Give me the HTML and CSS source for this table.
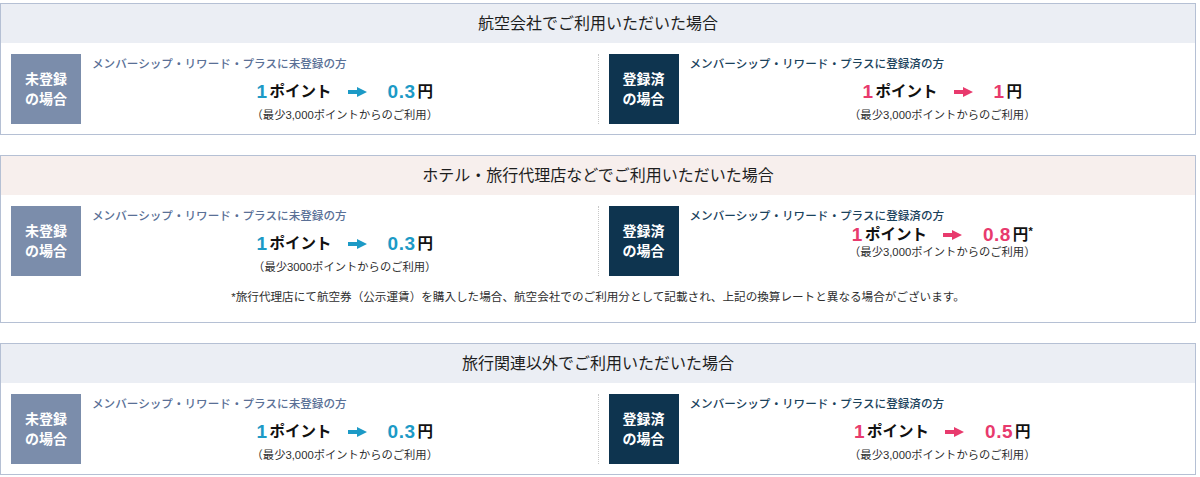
FILE: index.html
```html
<!DOCTYPE html>
<html lang="ja">
<head>
<meta charset="utf-8">
<title>ポイント換算レート</title>
<link rel="stylesheet" href="styles.css">
</head>
<body>
<div class="wrap">

  <section class="card">
    <h2 class="card-head">航空会社でご利用いただいた場合</h2>
    <div class="card-body">
      <div class="col">
        <div class="badge badge-un">未登録<br>の場合</div>
        <div class="info">
          <p class="member member-un">メンバーシップ・リワード・プラスに未登録の方</p>
          <p class="rate rate-un"><span class="num">1</span><span class="unit">ポイント</span><svg class="arrow" viewBox="0 0 19 10"><path d="M0 3h9V0l10 5-10 5V7H0z"/></svg><span class="num">0.3</span><span class="unit">円</span></p>
          <p class="sub">（最少3,000ポイントからのご利用）</p>
        </div>
      </div>
      <div class="col col-right">
        <div class="badge badge-reg">登録済<br>の場合</div>
        <div class="info">
          <p class="member member-reg">メンバーシップ・リワード・プラスに登録済の方</p>
          <p class="rate rate-reg"><span class="num">1</span><span class="unit">ポイント</span><svg class="arrow" viewBox="0 0 19 10"><path d="M0 3h9V0l10 5-10 5V7H0z"/></svg><span class="num">1</span><span class="unit">円</span></p>
          <p class="sub">（最少3,000ポイントからのご利用）</p>
        </div>
      </div>
    </div>
  </section>

  <section class="card">
    <h2 class="card-head card-head-pink">ホテル・旅行代理店などでご利用いただいた場合</h2>
    <div class="card-body">
      <div class="col">
        <div class="badge badge-un">未登録<br>の場合</div>
        <div class="info">
          <p class="member member-un">メンバーシップ・リワード・プラスに未登録の方</p>
          <p class="rate rate-un"><span class="num">1</span><span class="unit">ポイント</span><svg class="arrow" viewBox="0 0 19 10"><path d="M0 3h9V0l10 5-10 5V7H0z"/></svg><span class="num">0.3</span><span class="unit">円</span></p>
          <p class="sub">（最少3000ポイントからのご利用）</p>
        </div>
      </div>
      <div class="col col-right">
        <div class="badge badge-reg">登録済<br>の場合</div>
        <div class="info compact">
          <p class="member member-reg">メンバーシップ・リワード・プラスに登録済の方</p>
          <p class="rate rate-reg"><span class="num">1</span><span class="unit">ポイント</span><svg class="arrow" viewBox="0 0 19 10"><path d="M0 3h9V0l10 5-10 5V7H0z"/></svg><span class="num">0.8</span><span class="unit">円<sup class="ast">*</sup></span></p>
          <p class="sub">（最少3,000ポイントからのご利用）</p>
        </div>
      </div>
    </div>
    <p class="note">*旅行代理店にて航空券（公示運賃）を購入した場合、航空会社でのご利用分として記載され、上記の換算レートと異なる場合がございます。</p>
  </section>

  <section class="card">
    <h2 class="card-head">旅行関連以外でご利用いただいた場合</h2>
    <div class="card-body">
      <div class="col">
        <div class="badge badge-un">未登録<br>の場合</div>
        <div class="info">
          <p class="member member-un">メンバーシップ・リワード・プラスに未登録の方</p>
          <p class="rate rate-un"><span class="num">1</span><span class="unit">ポイント</span><svg class="arrow" viewBox="0 0 19 10"><path d="M0 3h9V0l10 5-10 5V7H0z"/></svg><span class="num">0.3</span><span class="unit">円</span></p>
          <p class="sub">（最少3,000ポイントからのご利用）</p>
        </div>
      </div>
      <div class="col col-right">
        <div class="badge badge-reg">登録済<br>の場合</div>
        <div class="info">
          <p class="member member-reg">メンバーシップ・リワード・プラスに登録済の方</p>
          <p class="rate rate-reg"><span class="num">1</span><span class="unit">ポイント</span><svg class="arrow" viewBox="0 0 19 10"><path d="M0 3h9V0l10 5-10 5V7H0z"/></svg><span class="num">0.5</span><span class="unit">円</span></p>
          <p class="sub">（最少3,000ポイントからのご利用）</p>
        </div>
      </div>
    </div>
  </section>

</div>
</body>
</html>
```

FILE: styles.css
```css
* { box-sizing: border-box; }

html, body {
  margin: 0;
  padding: 0;
  background: #ffffff;
}

body {
  font-family: "Liberation Sans", "Noto Sans CJK JP", sans-serif;
  color: #333333;
}

.wrap {
  width: 1196px;
  padding-top: 3px;
}

.card {
  border: 1px solid #b5c0d4;
  margin: 0 0 20px;
}

.card-head {
  margin: 0;
  height: 39px;
  line-height: 39px;
  background: #ebeef4;
  text-align: center;
  font-size: 16px;
  font-weight: 400;
  color: #1e1e1e;
}

.card-head-pink {
  background: #f7efed;
}

.card-body {
  display: flex;
  padding: 11px 0 10px;
}

.col {
  flex: 1;
  display: flex;
  padding-left: 10px;
}

.col-right {
  border-left: 1px dotted #c8c8c8;
}

.badge {
  flex: 0 0 70px;
  height: 70px;
  display: flex;
  align-items: center;
  justify-content: center;
  text-align: center;
  color: #ffffff;
  font-size: 14px;
  font-weight: 700;
  line-height: 20px;
}

.badge-un { background: #7b8dab; }
.badge-reg { background: #0e344f; }

.info {
  flex: 1;
  padding-left: 11px;
}

.info p { margin: 0; }

.member {
  margin-top: 2px !important;
  font-size: 11.6px;
  font-weight: 500;
  line-height: 16px;
  white-space: nowrap;
}

.member-un { color: #5a7096; }
.member-reg { color: #1a425c; }

.rate {
  margin-top: 8px !important;
  height: 24px;
  display: flex;
  align-items: center;
  justify-content: center;
  line-height: 24px;
}

.num {
  font-family: "Liberation Sans", sans-serif;
  font-size: 19px;
  font-weight: 700;
  letter-spacing: 0.5px;
}

.rate-un .num { color: #1c9ac6; }
.rate-reg .num { color: #e83a6d; }

.unit {
  margin-left: 2px;
  font-size: 15.5px;
  font-weight: 700;
  color: #111111;
}

.arrow {
  width: 19px;
  height: 10px;
  margin: 0 21px 0 16px;
}

.rate-un .arrow { fill: #1c9ac6; }
.rate-reg .arrow { fill: #e83a6d; }

.ast {
  font-size: 11px;
  vertical-align: 5px;
  line-height: 0;
}

.sub {
  margin-top: 3px !important;
  text-align: center;
  font-size: 11.3px;
  line-height: 16px;
  color: #2e2e2e;
}

.compact .rate {
  margin-top: 1px !important;
  height: 20px;
  line-height: 20px;
}

.compact .sub {
  margin-top: 0 !important;
  line-height: 14px;
}

.note {
  margin: 0;
  padding: 3px 0 17px;
  text-align: center;
  font-size: 11.6px;
  line-height: 16px;
  color: #2e2e2e;
}
```
